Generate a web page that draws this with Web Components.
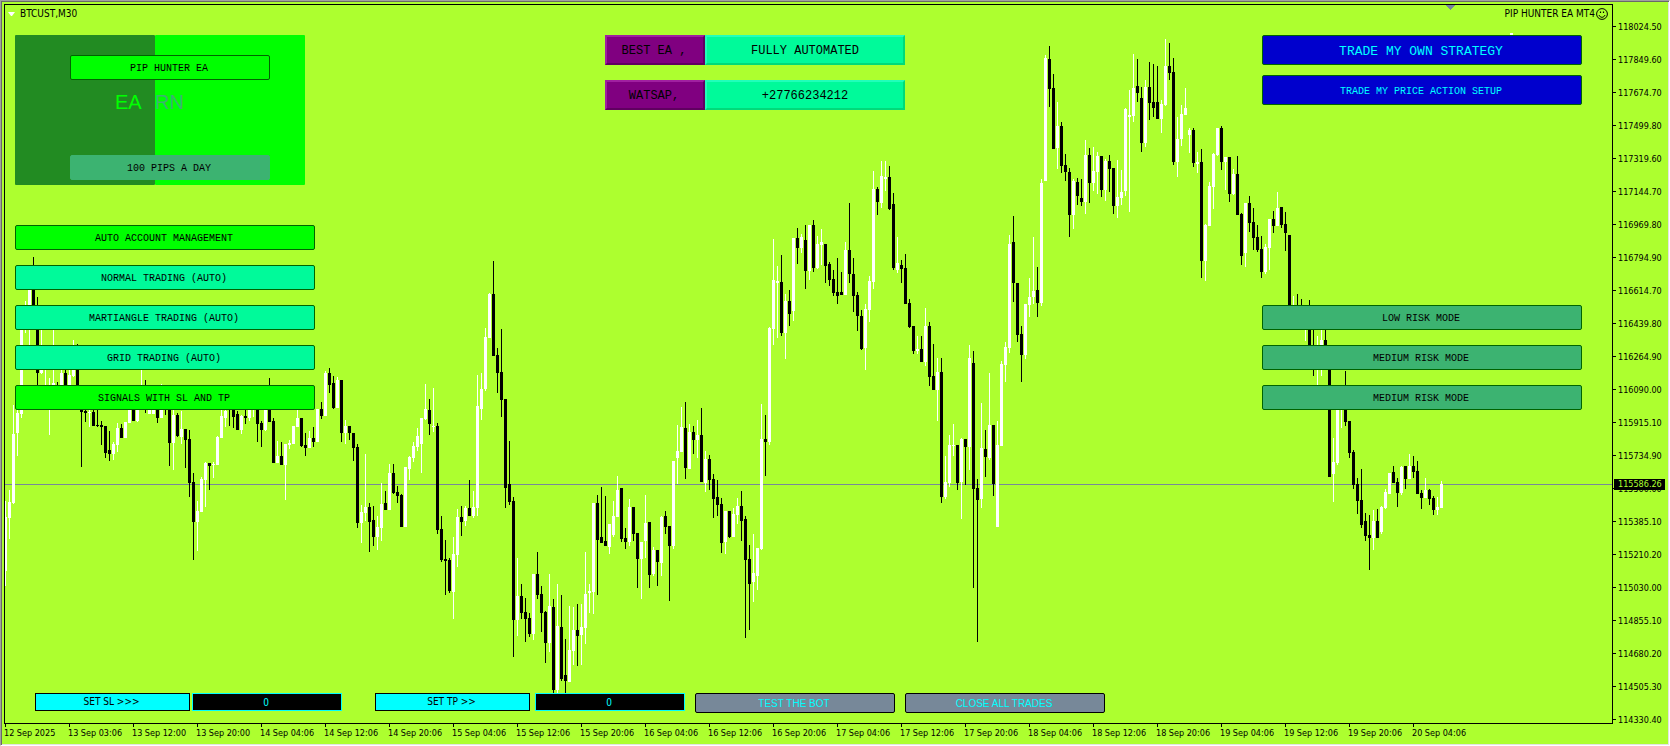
<!DOCTYPE html>
<html lang="en">
<head>
<meta charset="utf-8">
<title>BTCUST,M30</title>
<style>
  html, body { margin: 0; height: 100%; background: #adff2f; }
  body { font-family: "DejaVu Sans Condensed", "Noto Sans", sans-serif; font-size: 9px; color: #000; }
</style>
</head>
<body>
<trade-terminal></trade-terminal>

<script>
/* One candle per entry: colour (w = up, b = down), high, body top, body bottom, low. */
const CANDLES = `
w501,517,571,586 w490,502,518,539 w405,434,503,504 w408,413,433,456 w315,315,414,418 w301,310,320,333 w280,275,310,350 b257,275,315,320 b297,310,373,386 w320,350,373,374
w350,386,395,396 w378,390,400,435 w320,383,400,404 b382,390,400,400 w360,373,400,400 b360,373,395,395 w360,375,395,395 w340,350,376,377 b344,350,395,395 b388,388,412,467
b405,411,413,422 w405,412,413,427 b405,412,426,426 b405,425,426,427 b421,425,427,445 b426,426,453,458 b431,450,454,461 w442,444,454,460 w423,428,445,452 b424,428,438,438
w422,422,438,438 w395,395,423,423 b395,395,421,421 w395,395,421,422 w365,386,398,398 b380,390,405,413 w386,390,414,414 w386,390,414,414 b386,390,418,423 w384,390,418,418
b388,390,410,415 b405,405,443,466 w400,415,443,470 b413,415,436,437 w411,429,437,444 b429,429,440,468 b430,439,483,497 b473,482,522,560 w501,511,522,551 w477,479,512,512
w462,463,480,507 b463,463,466,490 w462,464,465,478 w436,437,465,465 w400,416,438,438 w400,411,418,427 b388,395,405,426 b388,395,417,428 b411,414,430,430 w415,416,430,434
b400,416,418,424 w390,395,418,421 w390,395,410,417 b390,395,424,442 b421,423,430,447 w390,395,430,431 b378,395,422,422 b418,421,463,463 w441,456,463,463 b442,456,465,465
w444,444,465,500 w440,443,445,449 w426,426,444,444 w410,418,427,427 b418,418,446,447 b433,445,448,456 w431,438,448,448 b427,438,442,447 w409,409,442,442 b402,409,416,419
w371,373,416,416 b368,373,385,393 b376,383,408,409 w377,380,408,408 b380,380,433,442 w420,426,433,444 b426,426,433,440 b433,433,448,461 b444,447,523,528 w505,512,523,543
w454,507,513,521 b503,507,522,552 b506,520,537,546 w516,527,537,550 w483,504,528,541 b491,503,510,510 w464,473,510,510 b464,473,493,494 b486,492,496,503 b494,495,527,527
w467,467,527,527 w456,457,469,480 w442,446,458,462 w428,436,447,451 w418,418,444,473 w384,409,419,420 b399,410,424,435 w388,426,427,432 b423,426,530,534 b516,529,560,562
b540,559,561,595 b558,560,591,593 w537,554,592,619 w509,517,555,567 b506,517,522,536 w506,508,521,526 b480,508,516,516 w491,507,516,518 w375,406,508,516 w373,389,409,420
w328,337,389,391 w293,294,338,338 b261,294,356,356 b348,355,373,393 b329,372,400,417 b399,399,488,508 b441,484,502,505 b497,501,620,657 w558,596,620,636 b584,596,613,619
b598,612,619,642 b613,618,634,637 w574,574,634,640 b552,574,595,599 b586,594,613,632 b611,612,643,663 w574,606,643,652 b599,607,690,694 w584,626,690,694 b595,627,679,681
b639,675,681,694 w606,650,682,682 w607,630,651,665 b604,630,636,666 w604,627,635,665 w552,594,628,644 w584,591,593,613 w503,503,592,614 b495,503,540,595 b487,537,543,543
b496,541,546,546 w524,524,547,554 w501,516,535,537 w476,490,517,517 b488,488,539,542 b528,538,542,549 w499,507,542,546 b507,507,534,541 b533,533,559,588 w542,542,559,599
w495,523,541,558 b522,522,575,588 w547,550,574,576 b550,550,562,586 w516,517,563,576 b511,516,527,534 b526,526,546,601 w461,461,546,549 w425,451,458,484 w407,427,452,452
b402,428,468,479 w424,432,469,469 b426,432,440,454 w420,435,440,458 b408,435,482,482 w451,459,483,492 b455,459,480,490 b474,479,499,518 b480,497,505,516 b498,504,543,553
w511,511,542,554 b511,511,537,538 w508,514,537,537 w498,506,515,524 b491,506,521,541 b516,519,560,638 b545,559,584,630 w534,573,582,602 w548,548,576,590 w404,439,549,550
b415,439,442,476 w327,328,442,445 w239,280,329,345 w266,281,283,338 b255,282,333,336 w294,301,333,359 b290,301,314,326 w238,238,311,321 b228,238,248,264 w234,237,248,253
b225,240,271,289 w225,225,271,280 b220,225,268,272 w236,244,268,269 w229,242,245,265 b244,244,266,283 b262,264,280,286 b270,279,293,296 b258,292,296,304 b272,292,295,295
w242,250,295,295 b203,250,274,283 b258,274,296,312 b292,295,316,331 b310,316,349,350 w304,309,348,370 w276,281,310,322 w171,189,282,289 b187,189,202,215 w161,176,203,208
w161,177,179,191 b166,177,209,210 b193,204,268,270 w237,263,270,273 b260,265,269,283 b254,268,304,304 b299,303,327,328 b326,326,351,354 w336,349,351,354 b336,349,362,362
w308,326,362,366 b322,326,377,386 b344,376,390,390 w358,372,390,421 b358,372,497,503 w456,482,497,499 w435,445,483,487 w424,445,446,456 b445,445,483,490 w438,439,482,519
b439,439,447,485 w345,358,447,470 b351,363,489,588 b479,488,500,642 w403,448,499,508 b430,449,457,477 w373,425,458,460 b425,425,484,496 w421,445,527,527 w361,364,446,446
w342,347,365,382 w235,244,348,353 b216,242,283,302 b283,283,335,342 b326,334,355,382 w304,304,355,359 w278,297,305,317 w237,291,297,304 b267,290,303,317 w179,183,303,306
w55,58,181,181 b46,59,89,107 b74,88,149,149 w102,126,148,169 b122,126,166,173 b154,165,172,181 b168,172,215,237 w179,181,215,229 b178,182,196,205 b179,198,202,206
w140,155,202,214 b148,155,183,203 w147,171,183,191 w152,156,172,194 b156,156,190,197 w159,161,190,201 b155,161,169,192 b168,168,206,214 w160,197,206,218 w170,192,198,205
w108,109,191,196 w90,115,117,212 w54,88,116,122 b59,86,93,102 b87,98,143,152 w80,87,143,147 b62,87,103,120 b64,102,108,117 b66,102,119,119 w100,104,119,133
w39,66,105,106 b43,66,73,80 b58,72,162,165 w117,139,162,177 w105,114,139,146 w88,108,115,115 w128,130,135,153 b128,130,163,167 w152,162,164,173 b149,162,261,278
w224,225,261,281 w182,186,226,226 w153,154,187,209 w128,128,155,156 b126,128,162,170 w157,157,162,190 b157,157,194,202 w169,174,194,195 b156,174,215,215 b213,214,256,265
w203,203,253,267 b196,203,223,232 b208,222,238,250 b225,237,250,252 b236,249,272,278 w244,247,272,274 w219,219,248,270 b211,219,226,233 w192,208,226,226 b207,207,225,228
b212,224,233,251 b235,235,310,310 w296,306,315,315 b294,308,318,318 b299,308,318,320 w310,315,325,341 b300,315,350,352 b330,346,360,376 w336,347,362,386 w325,340,360,376
b322,340,355,355 b350,350,477,477 w438,462,474,502 w395,395,463,465 w388,390,400,428 b371,395,422,426 b421,421,453,458 b450,452,485,489 b478,484,501,514 b469,500,525,528
b513,521,536,541 b515,535,538,570 w510,521,538,550 b509,521,538,538 w506,507,532,534 w489,492,508,509 w473,473,494,494 b466,472,483,483 b478,482,493,507 w466,467,493,495
b466,466,479,489 w454,466,479,479 b456,466,472,478 b461,471,494,494 b490,493,498,509 w478,490,498,498 b489,490,499,505 b496,498,510,515 w497,507,510,515 w481,484,508,508
`.trim().split(/\s+/).map(s => [s[0], ...s.slice(1).split(",").map(Number)]);

const PRICES = ["118024.50","117849.60","117674.70","117499.80","117319.60","117144.70","116969.80","116794.90",
  "116614.70","116439.80","116264.90","116090.00","115915.10","115734.90","115560.00","115385.10","115210.20",
  "115030.00","114855.10","114680.20","114505.30","114330.40"];

const TIMES = ["12 Sep 2025", "13 Sep 03:06", "13 Sep 12:00", "13 Sep 20:00"];
for (let day = 14; day < 20; day++) for (const t of ["04:06", "12:06", "20:06"]) TIMES.push(`${day} Sep ${t}`);
TIMES.push("20 Sep 04:06");

function define(name, html, setup) {
  const template = document.createElement("template");
  customElements.define(name, class extends HTMLElement {
    constructor() {
      super();
      template.innerHTML = typeof html === "function" ? html() : html;
      this.attachShadow({ mode: "open" }).append(template.content.cloneNode(true));
    }
    connectedCallback() { if (setup) setup(this, this.shadowRoot); }
  });
}

define("candle-chart", () => {
  const step = 4, start = 5, inset = 5;
  const path = { w: "", b: "" };
  CANDLES.forEach(([c, high, top, bottom, low], i) => {
    const x = start + i * step - inset;
    path[c] += `M${x} ${high - inset}h1v${low - high}h-1zM${x - 1} ${top - inset}h3v${bottom - top}h-3z`;
  });
  return `
  <style>
    :host { display: block; min-width: 0; overflow: hidden; }
    svg { display: block; width: 100%; height: 100%; }
  </style>
  <svg shape-rendering="crispEdges" role="img" aria-label="BTCUST 30 minute candles">
    <rect x="0" y="479" width="100%" height="1" fill="#778899"/>
    <path fill="#fff" fill-rule="nonzero" d="${path.w}"/>
    <path fill="#000" d="${path.b}"/>
    <path fill="#778899" d="M1441 0h9v1h-1v1h-1v1h-1v1h-1v1h-1v-1h-1v-1h-1v-1h-1v-1h-1z"/>
    <rect x="1505" y="28" width="3" height="2" fill="#fff"/>
  </svg>`;
});

define("price-axis", () => `
  <style>
    :host { display: block; position: relative; }
    ol { list-style: none; margin: 0; padding: 0; }
    li { display: flex; align-items: center; gap: 2px; height: 33px; }
    li::before { content: ""; width: 3px; height: 1px; background: #000; }
    output { position: absolute; left: 1px; top: 475px; width: 51px; height: 11px; padding-left: 4px;
      box-sizing: border-box; line-height: 11px; background: #000; color: #adff2f; }
  </style>
  <ol>${PRICES.map(p => `<li>${p}</li>`).join("")}</ol>
  <output>115586.26</output>`);

define("time-axis", () => `
  <style>
    :host { display: block; overflow: hidden; }
    ol { display: flex; list-style: none; margin: 0; padding: 0 0 0 1px; }
    li { flex: 0 0 64px; white-space: nowrap; line-height: 12px; }
    li::before { content: ""; display: block; width: 1px; height: 3px; background: #000; }
    span { margin-left: -1px; }
  </style>
  <ol>${TIMES.map(t => `<li><span>${t}</span></li>`).join("")}</ol>`);

define("chart-header", `
  <style>
    :host { display: flex; justify-content: space-between; height: 30px; padding: 0 4px 0 3px; box-sizing: border-box;
      font-size: 10px; line-height: 16px; }
    div { display: flex; align-items: center; height: 18px; gap: 5px; }
    .expert { gap: 1px; }
    svg { display: block; }
  </style>
  <div><svg width="7" height="4" viewBox="0 0 7 4"><path fill="#fff" d="M0 0h7L4 4H3z"/></svg><span>BTCUST,M30</span></div>
  <div class="expert"><span>PIP HUNTER EA MT4</span>
    <svg width="12" height="12" viewBox="0 0 12 12" fill="none" stroke="#000">
      <circle cx="6" cy="6" r="5.4"/><path d="M3 7c.6 1.6 1.7 2.300 3 2.300S8.400 8.600 9 7"/>
      <path d="M4.500 3.500v1.500M7.500 3.500v1.500" stroke-width="1.200"/></svg>
  </div>`);

define("panel-button", `
  <style>
    :host { display: block; height: 25px; }
    button { display: block; width: 100%; height: 100%; margin: 0; padding: var(--drop, 2px) 2px 0 0; border-radius: 2px;
      border: 1px solid var(--edge, #006400); background: var(--fill, #0f0); color: var(--ink, #000);
      font: var(--face, 10px "Liberation Mono", monospace); white-space: nowrap; }
  </style>
  <button type="button"><slot></slot></button>`);

define("brand-panel", `
  <style>
    :host { display: grid; grid-template: 150px / 140px 150px; }
    .dark, .light { grid-row: 1; border-radius: 1px; }
    .dark { grid-column: 1; background: #228b22; }
    .light { grid-column: 2; background: #0f0; }
    .content { grid-area: 1 / 1 / 2 / 3; display: flex; flex-direction: column; padding: 20px 35px 5px 55px; }
    .earn { display: grid; grid-template-columns: 40px 1fr; padding-left: 45px; margin-top: 10px;
      font: 20px/24px "Liberation Sans", sans-serif; color: #0f0; }
    .earn span + span { color: #3cb371; }
    .goal { margin-top: auto; --fill: #3cb371; --edge: #3cb371; }
  </style>
  <div class="dark"></div><div class="light"></div>
  <div class="content">
    <panel-button>PIP HUNTER EA</panel-button>
    <div class="earn"><span>EA</span><span>RN</span></div>
    <panel-button class="goal">100 PIPS A DAY</panel-button>
  </div>`);

define("info-row", `
  <style>
    :host { display: grid; grid-template: 30px / 100px 200px; font: 12px "Liberation Mono", monospace; }
    div { display: flex; align-items: center; justify-content: center; border: 2px solid; padding-top: 2px; white-space: pre; }
    .key { background: #800080; border-color: #a020a0 #600060 #600060 #a020a0; padding-right: 2px; }
    .value { background: #00fa9a; border-color: #20ffba #00da7a #00da7a #20ffba; }
  </style>
  <div class="key"><slot name="key"></slot></div><div class="value"><slot></slot></div>`);

define("value-field", `
  <style>
    :host { display: flex; gap: var(--gap, 2px); }
    label, input { box-sizing: border-box; height: 18px; margin: 0; padding: 0; border: 1px solid #000;
      font: inherit; font-size: 10px; line-height: 16px; text-align: center; border-radius: 0; }
    label { width: 155px; padding-right: 2px; background: #0ff; }
    input { width: 150px; padding-right: 2px; background: #000; border-color: #0ff; color: #0ff; outline: none; }
  </style>
  <label for="value"><slot></slot></label><input id="value" type="text" value="0">`);

define("trade-terminal", `
  <style>
    :host { display: grid; grid-template: 1fr 20px / minmax(0, 1fr) 55px; box-sizing: border-box; height: 100vh; min-height: 700px;
      overflow: hidden; padding: 3px 1px 1px 3px; background: #adff2f;
      border: 1px solid; border-color: #a0a0a0 #fff #fff #a0a0a0;
      box-shadow: inset 1px 1px #696969, inset -1px -1px #e3e3e3; }
    .plot { display: grid; grid-template: minmax(0, 1fr) / minmax(0, 1fr); border: 1px solid #000; min-height: 0; }
    candle-chart, .overlay { grid-area: 1 / 1; min-height: 0; }
    .overlay { display: flex; flex-direction: column; z-index: 1; }
    .panels { display: flex; padding: 0 30px 0 10px; }
    .left { width: 300px; }
    .middle { display: flex; flex-direction: column; gap: 15px; margin-left: 290px; }
    .right { width: 320px; margin-left: auto; }
    .list { display: flex; flex-direction: column; gap: 15px; }
    .left .list { margin-top: 40px; }
    .mint { --fill: #00fa9a; }
    .trades { display: flex; flex-direction: column; gap: 10px; }
    .trades panel-button { height: 30px; --fill: #0000cd; --ink: #0ff; }
    .own { --face: 13px "Liberation Mono", monospace; }
    .risk { margin-top: 200px; --fill: #3cb371; }
    form { display: flex; align-items: flex-start; margin-top: auto; padding: 0 0 10px 30px; }
    .tp { --gap: 5px; margin-left: 33px; }
    form panel-button { width: 200px; height: 20px; margin-left: 10px; --fill: #778899; --edge: #000; --ink: #0ff;
      --drop: 0; --face: 10px "Liberation Sans", sans-serif; }
    price-axis { grid-area: 1 / 2 / 3 / 3; padding-top: 6px; }
  </style>
  <div class="plot">
    <candle-chart></candle-chart>
    <div class="overlay">
      <chart-header></chart-header>
      <div class="panels">
        <div class="left">
          <brand-panel></brand-panel>
          <div class="list">
            <panel-button>AUTO ACCOUNT MANAGEMENT</panel-button>
            <panel-button class="mint">NORMAL TRADING (AUTO)</panel-button>
            <panel-button class="mint">MARTIANGLE TRADING (AUTO)</panel-button>
            <panel-button class="mint">GRID TRADING (AUTO)</panel-button>
            <panel-button>SIGNALS WITH SL AND TP</panel-button>
          </div>
        </div>
        <div class="middle">
          <info-row><span slot="key">BEST EA ,</span>FULLY AUTOMATED</info-row>
          <info-row><span slot="key">WATSAP,</span>+27766234212</info-row>
        </div>
        <div class="right">
          <div class="trades">
            <panel-button class="own">TRADE MY OWN STRATEGY</panel-button>
            <panel-button>TRADE MY PRICE ACTION SETUP</panel-button>
          </div>
          <div class="list risk">
            <panel-button>LOW RISK MODE</panel-button>
            <panel-button>MEDIUM RISK MODE</panel-button>
            <panel-button>MEDIUM RISK MODE</panel-button>
          </div>
        </div>
      </div>
      <form>
        <value-field>SET SL &gt;&gt;&gt;</value-field>
        <value-field class="tp">SET TP &gt;&gt;</value-field>
        <panel-button>TEST THE BOT</panel-button>
        <panel-button>CLOSE ALL TRADES</panel-button>
      </form>
    </div>
  </div>
  <price-axis></price-axis>
  <time-axis></time-axis>`);
</script>
</body>
</html>
